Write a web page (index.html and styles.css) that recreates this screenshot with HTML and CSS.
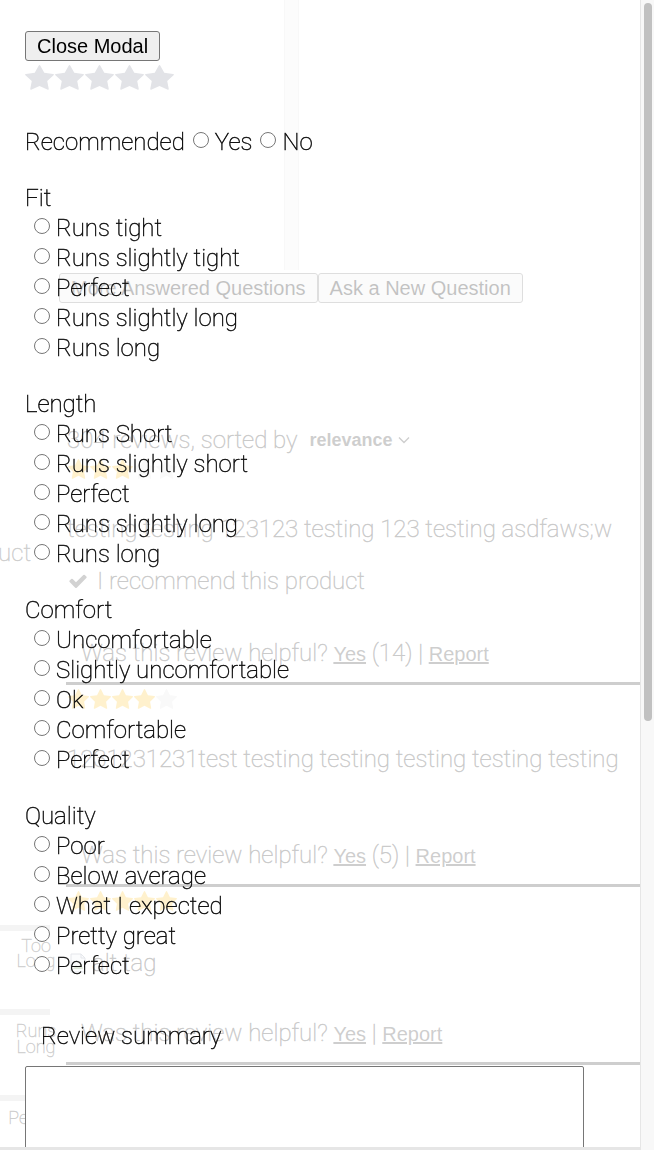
FILE: index.html
```html
<!DOCTYPE html>
<html lang="en">
<head>
<meta charset="utf-8">
<title>Reviews – write a review</title>
<link rel="stylesheet" href="styles.css">
</head>
<body>
<svg class="defs" width="0" height="0" aria-hidden="true">
  <symbol id="star" viewBox="0 0 1664 1600" preserveAspectRatio="none">
    <path d="M1664 615q0 22-26 48l-363 354 86 500q1 7 1 20 0 21-10.5 35.5t-30.5 14.5q-19 0-40-12l-449-236-449 236q-22 12-40 12-21 0-31.5-14.5t-10.5-35.5q0-6 2-20l86-500-364-354q-25-27-25-48 0-37 56-46l502-73 225-455q19-41 49-41t49 41l225 455 502 73q56 9 56 46z"/>
  </symbol>
</svg>

<div class="page" aria-hidden="true">
  <div class="qa-rail"></div>
  <div class="qa-actions">
    <button class="btn">More Answered Questions</button><button class="btn">Ask a New Question</button>
  </div>

  <div class="reviews">
    <aside class="side">
      <div class="side-cut">Would recommend this product</div>
      <div class="bar bar-1"></div>
      <div class="side-label">Too<br>Long</div>
      <div class="bar bar-2"></div>
      <div class="side-label lbl-2">Runs<br>Long</div>
      <div class="bar bar-3"></div>
      <div class="side-label lbl-3">Perfect</div>
    </aside>

    <div class="main">
      <div class="sort">304 reviews, sorted by<span class="sort-key">relevance</span><svg class="chev" viewBox="0 0 12 8"><polyline points="1,1.5 6,6.5 11,1.5"/></svg></div>

      <article class="review">
        <div class="rstars">
          <svg class="on"><use href="#star"/></svg><svg class="on"><use href="#star"/></svg><svg class="on"><use href="#star"/></svg><svg class="off"><use href="#star"/></svg><svg class="off"><use href="#star"/></svg>
        </div>
        <p class="rtext">testing testing 123123 testing 123 testing asdfaws;w</p>
        <p class="rec"><svg class="check" viewBox="0 0 1792 1792"><path d="M1671 566q0 40-28 68l-724 724-136 136q-28 28-68 28t-68-28l-136-136-362-362q-28-28-28-68t28-68l136-136q28-28 68-28t68 28l294 295 656-657q28-28 68-28t68 28l136 136q28 28 28 68z"/></svg>I recommend this product</p>
        <p class="helpful">Was this review helpful? <a class="lnk">Yes</a> (14) | <a class="lnk">Report</a></p>
      </article>

      <article class="review">
        <div class="rstars">
          <svg class="on"><use href="#star"/></svg><svg class="on"><use href="#star"/></svg><svg class="on"><use href="#star"/></svg><svg class="on"><use href="#star"/></svg><svg class="off"><use href="#star"/></svg>
        </div>
        <p class="rtext">1231231231test testing testing testing testing testing</p>
        <p class="helpful helpful-far">Was this review helpful? <a class="lnk">Yes</a> (5) | <a class="lnk">Report</a></p>
      </article>

      <article class="review">
        <div class="rstars">
          <svg class="on"><use href="#star"/></svg><svg class="on"><use href="#star"/></svg><svg class="on"><use href="#star"/></svg><svg class="on"><use href="#star"/></svg><svg class="on"><use href="#star"/></svg>
        </div>
        <p class="rimg"><svg class="broken" viewBox="0 0 20 20"><path d="M3 1h10l4 4v14H3z" fill="#eef1f5" stroke="#8f9bab"/><path d="M13 1v4h4" fill="none" stroke="#8f9bab"/><path d="M5 16l3-4 2 2 3-4 2 6z" fill="#7fa36a"/></svg>alt tag</p>
        <p class="helpful helpful-near">Was this review helpful? <a class="lnk">Yes</a> | <a class="lnk">Report</a></p>
      </article>

      <article class="review review-last">
        <div class="rstars">
          <svg class="on"><use href="#star"/></svg><svg class="on"><use href="#star"/></svg><svg class="on"><use href="#star"/></svg><svg class="on"><use href="#star"/></svg><svg class="on"><use href="#star"/></svg>
        </div>
      </article>
    </div>
  </div>
</div>

<div class="modal" role="dialog" aria-label="Write a review">
  <div class="modal-body">
    <button class="close">Close Modal</button>
    <div class="mstars">
      <svg><use href="#star"/></svg><svg><use href="#star"/></svg><svg><use href="#star"/></svg><svg><use href="#star"/></svg><svg><use href="#star"/></svg>
    </div>

    <div class="recommend">
      <span>Recommended</span>
      <input class="radio" type="radio" name="rec"><span>Yes</span>
      <input class="radio" type="radio" name="rec"><span>No</span>
    </div>

    <div class="group">
      <div class="glabel">Fit</div>
      <label class="opt"><input class="radio" type="radio" name="fit"><span>Runs tight</span></label>
      <label class="opt"><input class="radio" type="radio" name="fit"><span>Runs slightly tight</span></label>
      <label class="opt"><input class="radio" type="radio" name="fit"><span>Perfect</span></label>
      <label class="opt"><input class="radio" type="radio" name="fit"><span>Runs slightly long</span></label>
      <label class="opt"><input class="radio" type="radio" name="fit"><span>Runs long</span></label>
    </div>

    <div class="group">
      <div class="glabel">Length</div>
      <label class="opt"><input class="radio" type="radio" name="len"><span>Runs Short</span></label>
      <label class="opt"><input class="radio" type="radio" name="len"><span>Runs slightly short</span></label>
      <label class="opt"><input class="radio" type="radio" name="len"><span>Perfect</span></label>
      <label class="opt"><input class="radio" type="radio" name="len"><span>Runs slightly long</span></label>
      <label class="opt"><input class="radio" type="radio" name="len"><span>Runs long</span></label>
    </div>

    <div class="group">
      <div class="glabel">Comfort</div>
      <label class="opt"><input class="radio" type="radio" name="com"><span>Uncomfortable</span></label>
      <label class="opt"><input class="radio" type="radio" name="com"><span>Slightly uncomfortable</span></label>
      <label class="opt"><input class="radio" type="radio" name="com"><span>Ok</span></label>
      <label class="opt"><input class="radio" type="radio" name="com"><span>Comfortable</span></label>
      <label class="opt"><input class="radio" type="radio" name="com"><span>Perfect</span></label>
    </div>

    <div class="group">
      <div class="glabel">Quality</div>
      <label class="opt"><input class="radio" type="radio" name="qua"><span>Poor</span></label>
      <label class="opt"><input class="radio" type="radio" name="qua"><span>Below average</span></label>
      <label class="opt"><input class="radio" type="radio" name="qua"><span>What I expected</span></label>
      <label class="opt"><input class="radio" type="radio" name="qua"><span>Pretty great</span></label>
      <label class="opt"><input class="radio" type="radio" name="qua"><span>Perfect</span></label>
    </div>

    <div class="flabel">Review summary</div>
    <textarea class="field summary"></textarea>

    <div class="flabel">Review</div>
    <textarea class="field body-text"></textarea>

    <div class="flabel">Nickname</div>
    <input class="field nick" type="text">

    <button class="close submit">Submit Review</button>
  </div>
</div>

<div class="vscroll" aria-hidden="true"><div class="vthumb"></div></div>
<div class="bottom-edge"></div>
</body>
</html>
```

FILE: styles.css
```css
* { box-sizing: border-box; }

html, body {
  margin: 0;
  height: 100%;
  overflow: hidden;
}

body {
  font-family: Roboto, "Liberation Sans", sans-serif;
  font-weight: 100;
  -webkit-text-stroke: 0.5px currentColor;
  font-size: 24px;
  color: #222;
  background: #fff;
}

.defs { position: absolute; width: 0; height: 0; }

p { margin: 0; }

/* ---------- background page ---------- */
.page {
  height: 100vh;
  overflow: hidden;
}

.qa-rail {
  margin-left: 284px;
  width: 15px;
  height: 270px;
  background: #f3f3f3;
  border-left: 1px solid #e3e3e3;
  border-right: 1px solid #e3e3e3;
}

.qa-actions {
  display: flex;
  margin-top: 3px;
  padding-left: 59px;
}

.btn, .close {
  font-family: "Liberation Sans", Arial, sans-serif;
  font-weight: 400;
  -webkit-text-stroke: 0;
  font-size: 20px;
  color: #000;
  background: #efefef;
  border: 1px solid #767676;
  border-radius: 3px;
  height: 30px;
  padding: 0 11px;
  line-height: 28px;
}

.reviews {
  display: grid;
  grid-template-columns: 66px 1fr;
  margin-top: 122px;
}

.side {
  display: flex;
  flex-direction: column;
  color: #333;
}

.side-cut {
  margin-top: 113px;
  width: 31px;
  line-height: 30px;
  white-space: nowrap;
  direction: rtl;
  text-align: right;
}

.bar {
  height: 6px;
  width: 50px;
  background: #cfcfcf;
}
.bar-1 { margin-top: 357px; }
.bar-2 { margin-top: 41px; }
.bar-3 { margin-top: 40px; width: 25px; }

.side-label {
  margin-top: 7px;
  width: 72px;
  font-size: 18px;
  -webkit-text-stroke: 0.4px currentColor;
  line-height: 15px;
  text-align: center;
  white-space: nowrap;
}
.lbl-2 { margin-top: 8px; line-height: 16px; }
.lbl-3 { margin-top: 9px; }

.main { min-width: 0; }

.sort {
  display: flex;
  align-items: center;
  height: 30px;
  line-height: 30px;
  padding-left: 1px;
  white-space: nowrap;
}

.sort-key {
  margin-left: 12px;
  font-family: "Liberation Sans", Arial, sans-serif;
  font-weight: 700;
  -webkit-text-stroke: 0;
  font-size: 18px;
  color: #333;
}

.chev {
  width: 12px;
  height: 8px;
  margin-left: 5px;
  fill: none;
  stroke: #333;
  stroke-width: 1.4;
}

.review {
  padding: 4px 0 13px;
  border-bottom: 3px solid #333;
}

.review-last { border-bottom: 0; }

.rstars {
  display: flex;
  height: 21px;
  padding-left: 2px;
}

.rstars svg {
  width: 21px;
  height: 20px;
  margin-right: 1px;
}

.rstars .on { fill: #ffc52e; }
.rstars .off { fill: #e4e4e4; }

.rtext, .rimg {
  margin-top: 34px;
  line-height: 30px;
  padding-left: 1px;
  white-space: nowrap;
}

.rimg {
  display: flex;
  align-items: center;
  margin-top: 36px;
}

.broken {
  width: 20px;
  height: 20px;
  margin: 0 4px 0 1px;
}

.rec {
  display: flex;
  align-items: center;
  margin-top: 22px;
  line-height: 30px;
  padding-left: 2px;
  white-space: nowrap;
}

.check {
  width: 20px;
  height: 20px;
  margin-right: 9px;
  fill: #444;
}

.helpful {
  margin-top: 42px;
  line-height: 30px;
  padding-left: 15px;
  white-space: nowrap;
}

.helpful-near { margin-top: 40px; }
.helpful-far { margin-top: 66px; }

.lnk {
  font-family: "Liberation Sans", Arial, sans-serif;
  font-weight: 400;
  -webkit-text-stroke: 0;
  font-size: 20px;
  color: #333;
  text-decoration: underline;
}

/* ---------- modal ---------- */
.modal {
  position: fixed;
  inset: 0;
  background: rgba(255, 255, 255, 0.76);
  overflow-y: auto;
  overflow-x: hidden;
  color: #111;
}

.modal-body {
  padding: 31px 25px 52px;
}

.close { display: block; }

.mstars {
  display: flex;
  margin-top: 4px;
  height: 25px;
}

.mstars svg {
  width: 29px;
  height: 25px;
  margin-right: 1px;
  fill: #e2e3e7;
}

.recommend {
  display: flex;
  align-items: flex-start;
  margin-top: 37px;
  height: 30px;
  line-height: 30px;
  white-space: nowrap;
}

.group { margin-top: 26px; }

.glabel { line-height: 30px; }

.opt {
  display: flex;
  align-items: flex-start;
  height: 30px;
  line-height: 30px;
  white-space: nowrap;
}

.radio {
  flex: none;
  width: 16px;
  height: 16px;
  margin: 5px 6px 0 9px;
}

.recommend .radio { margin-left: 8px; }

.flabel {
  margin-top: 40px;
  line-height: 30px;
  padding-left: 16px;
}

.field {
  display: block;
  margin-top: 15px;
  width: 559px;
  border: 1px solid #767676;
  border-radius: 2px;
  background: #fff;
  font-family: "Liberation Sans", Arial, sans-serif;
  font-weight: 400;
  font-size: 16px;
  -webkit-text-stroke: 0;
}

.summary { height: 150px; }
.body-text { height: 300px; }
.nick { height: 34px; }

.submit { margin-top: 40px; }

/* scrollbar drawn over the modal's right edge */
.vscroll {
  position: fixed;
  top: 0;
  right: 0;
  bottom: 0;
  width: 14px;
  background: #f8f8f8;
  border-left: 1px solid #e6e6e6;
}

.vthumb {
  margin: 3px 2px 0 3px;
  height: 718px;
  border-radius: 4px;
  background: #c1c1c1;
}

.bottom-edge {
  position: fixed;
  left: 0;
  right: 14px;
  bottom: 0;
  height: 3px;
  background: #e6e6e6;
}
```
